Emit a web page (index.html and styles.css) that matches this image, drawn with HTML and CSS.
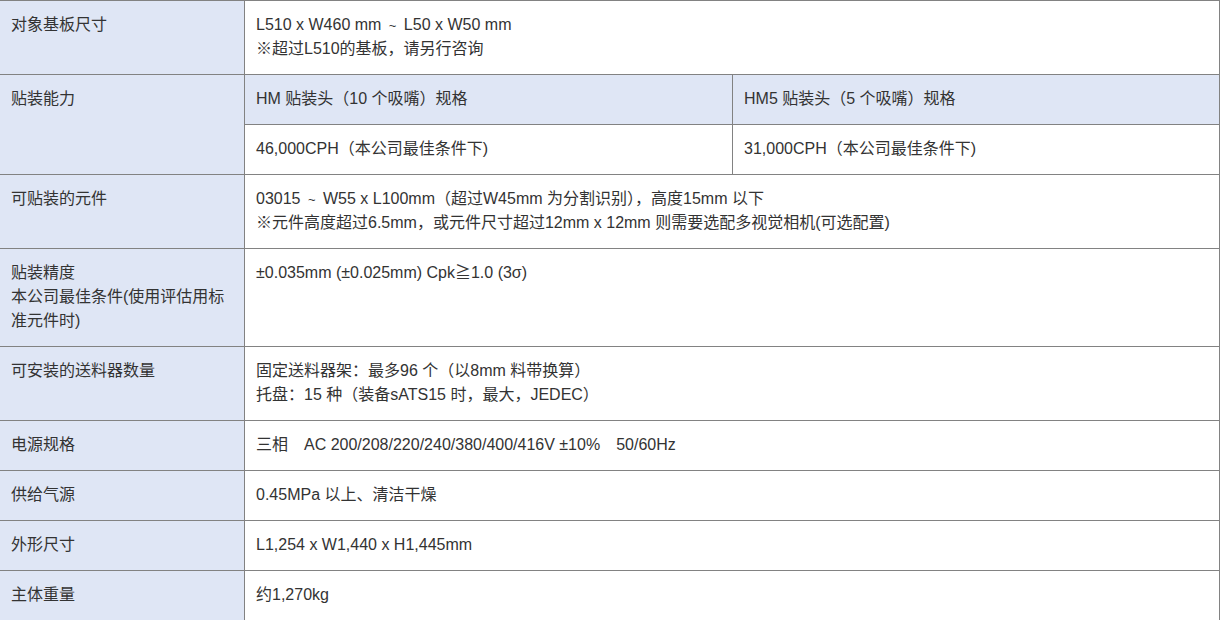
FILE: index.html
```html
<!DOCTYPE html>
<html lang="zh-CN">
<head>
<meta charset="utf-8">
<title>规格</title>
<link rel="stylesheet" href="styles.css">
</head>
<body>
<table class="spec">
  <colgroup>
    <col class="c-label">
    <col class="c-a">
    <col class="c-b">
  </colgroup>
  <tbody>
    <tr>
      <th class="label">对象基板尺寸</th>
      <td colspan="2">L510 x W460 mm <span class="tilde">~</span> L50 x W50 mm<br>※超过L510的基板，请另行咨询</td>
    </tr>
    <tr>
      <th class="label" rowspan="2">贴装能力</th>
      <td class="sub">HM 贴装头（10 个吸嘴）规格</td>
      <td class="sub">HM5 贴装头（5 个吸嘴）规格</td>
    </tr>
    <tr>
      <td>46,000CPH（本公司最佳条件下)</td>
      <td>31,000CPH（本公司最佳条件下)</td>
    </tr>
    <tr>
      <th class="label">可贴装的元件</th>
      <td colspan="2">03015 <span class="tilde">~</span> W55 x L100mm（超过W45mm 为分割识别），高度15mm 以下<br>※元件高度超过6.5mm，或元件尺寸超过12mm x 12mm 则需要选配多视觉相机(可选配置)</td>
    </tr>
    <tr>
      <th class="label">贴装精度<br>本公司最佳条件(使用评估用标准元件时)</th>
      <td colspan="2">±0.035mm (±0.025mm) Cpk≧1.0 (3σ)</td>
    </tr>
    <tr>
      <th class="label">可安装的送料器数量</th>
      <td colspan="2">固定送料器架：最多96 个（以8mm 料带换算）<br>托盘：15 种（装备sATS15 时，最大，JEDEC）</td>
    </tr>
    <tr>
      <th class="label">电源规格</th>
      <td colspan="2">三相　AC 200/208/220/240/380/400/416V ±10%　50/60Hz</td>
    </tr>
    <tr>
      <th class="label">供给气源</th>
      <td colspan="2">0.45MPa 以上、清洁干燥</td>
    </tr>
    <tr>
      <th class="label">外形尺寸</th>
      <td colspan="2">L1,254 x W1,440 x H1,445mm</td>
    </tr>
    <tr>
      <th class="label">主体重量</th>
      <td colspan="2">约1,270kg</td>
    </tr>
  </tbody>
</table>
</body>
</html>
```
FILE: styles.css
```css
html, body {
  margin: 0;
  padding: 0;
  background: #ffffff;
}

body {
  font-family: "Liberation Sans", Arial, "Noto Sans CJK SC", sans-serif;
  font-size: 16px;
  line-height: 24px;
  color: #333333;
}

.spec {
  border-collapse: collapse;
  table-layout: fixed;
  width: 1220px;
  margin-left: -1px;
}

.c-label { width: 245px; }
.c-a { width: 488px; }
.c-b { width: 487px; }

.spec th,
.spec td {
  border: 1px solid #828282;
  padding: 12px 11px 13px 11px;
  text-align: left;
  vertical-align: top;
  font-weight: normal;
}

.spec .label {
  background: #dfe6f5;
}

.spec .sub {
  background: #dfe6f5;
}

.tilde {
  margin: 0 3px;
  font-size: 13px;
  line-height: 1;
}
```
